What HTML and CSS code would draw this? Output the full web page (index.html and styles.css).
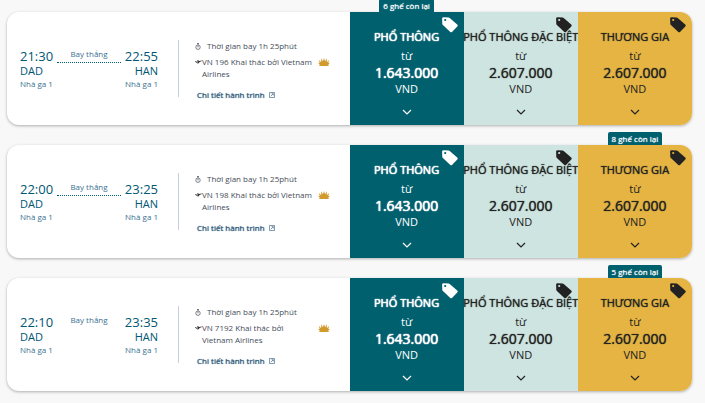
FILE: index.html
```
<!DOCTYPE html>
<html lang="vi">

<head>
  <meta charset="UTF-8">
  <meta name="viewport" content="width=device-width, initial-scale=1.0">
  <title>Chuyến bay DAD - HAN</title>
  <link rel="stylesheet" href="styles.css">
</head>

<body>

  <!-- shared icons -->
  <svg class="sprite" aria-hidden="true">
    <symbol id="icon-tag" viewBox="0 0 16 16">
      <path fill-rule="evenodd" d="M1.600 0.200L6.600 0.400Q7.200 0.500 7.700 0.900L15.200 7.600Q16.200 8.500 15.300 9.400L10 14.900Q9.200 15.700 8.300 14.900L0.900 8Q0.400 7.500 0.300 6.900L0.100 1.600Q0.100 0.200 1.600 0.200ZM3.200 1.900A1.100 1.100 0 1 0 3.200 4.100A1.100 1.100 0 1 0 3.200 1.900Z" />
    </symbol>
    <symbol id="icon-chevron" viewBox="0 0 10 6">
      <path d="M1 1L5 5L9 1" fill="none" stroke="currentColor" stroke-width="1.200" />
    </symbol>
    <symbol id="icon-clock" viewBox="0 0 6 7">
      <circle cx="3" cy="4.200" r="2.200" fill="none" stroke="currentColor" stroke-width="0.700" />
      <path d="M2 0.500H4M3 0.500V2M3 2.800V4.400" fill="none" stroke="currentColor" stroke-width="0.700" />
    </symbol>
    <symbol id="icon-plane" viewBox="0 0 7 6">
      <path d="M0 2L0.800 2L1.600 2.700L3 2.400L1.900 1.400L2.600 1.200L4.600 2L6.200 1.600Q7 1.600 6.800 2.100L4.700 3L3 4.800L2.300 4.900L3.100 3.400L1.200 3.700Z" />
    </symbol>
    <symbol id="icon-external" viewBox="0 0 6 6">
      <path d="M3 0.500H0.500V5.500H5.500V0.500H3M1.800 4.200L4.200 1.800M2.500 1.700H4.300V3.500" fill="none" stroke="currentColor" stroke-width="0.600" />
    </symbol>
    <symbol id="icon-lotus" viewBox="0 0 12 8">
      <path d="M6 0L7.100 3.200L8.900 0.300L8.800 4.200L11.300 1.700L10.200 5L12 4.800L10.300 6.600L11 7.700Q6 8.200 1 7.700L1.700 6.600L0 4.800L1.800 5L0.700 1.700L3.200 4.200L3.100 0.300L4.900 3.200Z" />
    </symbol>
  </svg>

  <main class="flights">
    <article class="flight">
      <div class="info">
        <div class="route">
          <div class="stop">
            <span class="time">21:30</span>
            <span class="code">DAD</span>
            <span class="terminal">Nhà ga 1</span>
          </div>
          <div class="direct dotted">Bay thẳng</div>
          <div class="stop arrive">
            <span class="time">22:55</span>
            <span class="code">HAN</span>
            <span class="terminal">Nhà ga 1</span>
          </div>
        </div>
        <div class="details">
          <p class="duration"><svg class="clock"><use href="#icon-clock" /></svg>Thời gian bay 1h 25phút</p>
          <div class="operator">
            <svg class="plane"><use href="#icon-plane" /></svg>
            <span class="carrier">VN 196 Khai thác bởi Vietnam Airlines</span>
            <svg class="lotus"><use href="#icon-lotus" /></svg>
          </div>
          <a class="more" href="#">Chi tiết hành trình<svg class="external"><use href="#icon-external" /></svg></a>
        </div>
      </div>
      <button type="button" class="fare economy">
        <span class="seats">6 ghế còn lại</span>
        <svg class="tag"><use href="#icon-tag" /></svg>
        <span class="cabin">PHỔ THÔNG</span>
        <span class="from">từ</span>
        <span class="price">1.643.000</span>
        <span class="currency">VND</span>
        <svg class="chevron"><use href="#icon-chevron" /></svg>
      </button>
      <button type="button" class="fare premium">
        <svg class="tag"><use href="#icon-tag" /></svg>
        <span class="cabin">PHỔ THÔNG ĐẶC BIỆT</span>
        <span class="from">từ</span>
        <span class="price">2.607.000</span>
        <span class="currency">VND</span>
        <svg class="chevron"><use href="#icon-chevron" /></svg>
      </button>
      <button type="button" class="fare business">
        <svg class="tag"><use href="#icon-tag" /></svg>
        <span class="cabin">THƯƠNG GIA</span>
        <span class="from">từ</span>
        <span class="price">2.607.000</span>
        <span class="currency">VND</span>
        <svg class="chevron"><use href="#icon-chevron" /></svg>
      </button>
    </article>

    <article class="flight">
      <div class="info">
        <div class="route">
          <div class="stop">
            <span class="time">22:00</span>
            <span class="code">DAD</span>
            <span class="terminal">Nhà ga 1</span>
          </div>
          <div class="direct dotted">Bay thẳng</div>
          <div class="stop arrive">
            <span class="time">23:25</span>
            <span class="code">HAN</span>
            <span class="terminal">Nhà ga 1</span>
          </div>
        </div>
        <div class="details">
          <p class="duration"><svg class="clock"><use href="#icon-clock" /></svg>Thời gian bay 1h 25phút</p>
          <div class="operator">
            <svg class="plane"><use href="#icon-plane" /></svg>
            <span class="carrier">VN 198 Khai thác bởi Vietnam Airlines</span>
            <svg class="lotus"><use href="#icon-lotus" /></svg>
          </div>
          <a class="more" href="#">Chi tiết hành trình<svg class="external"><use href="#icon-external" /></svg></a>
        </div>
      </div>
      <button type="button" class="fare economy">
        <svg class="tag"><use href="#icon-tag" /></svg>
        <span class="cabin">PHỔ THÔNG</span>
        <span class="from">từ</span>
        <span class="price">1.643.000</span>
        <span class="currency">VND</span>
        <svg class="chevron"><use href="#icon-chevron" /></svg>
      </button>
      <button type="button" class="fare premium">
        <svg class="tag"><use href="#icon-tag" /></svg>
        <span class="cabin">PHỔ THÔNG ĐẶC BIỆT</span>
        <span class="from">từ</span>
        <span class="price">2.607.000</span>
        <span class="currency">VND</span>
        <svg class="chevron"><use href="#icon-chevron" /></svg>
      </button>
      <button type="button" class="fare business">
        <span class="seats">8 ghế còn lại</span>
        <svg class="tag"><use href="#icon-tag" /></svg>
        <span class="cabin">THƯƠNG GIA</span>
        <span class="from">từ</span>
        <span class="price">2.607.000</span>
        <span class="currency">VND</span>
        <svg class="chevron"><use href="#icon-chevron" /></svg>
      </button>
    </article>

    <article class="flight">
      <div class="info">
        <div class="route">
          <div class="stop">
            <span class="time">22:10</span>
            <span class="code">DAD</span>
            <span class="terminal">Nhà ga 1</span>
          </div>
          <div class="direct">Bay thẳng</div>
          <div class="stop arrive">
            <span class="time">23:35</span>
            <span class="code">HAN</span>
            <span class="terminal">Nhà ga 1</span>
          </div>
        </div>
        <div class="details">
          <p class="duration"><svg class="clock"><use href="#icon-clock" /></svg>Thời gian bay 1h 25phút</p>
          <div class="operator">
            <svg class="plane"><use href="#icon-plane" /></svg>
            <span class="carrier">VN 7192 Khai thác bởi Vietnam Airlines</span>
            <svg class="lotus"><use href="#icon-lotus" /></svg>
          </div>
          <a class="more" href="#">Chi tiết hành trình<svg class="external"><use href="#icon-external" /></svg></a>
        </div>
      </div>
      <button type="button" class="fare economy">
        <svg class="tag"><use href="#icon-tag" /></svg>
        <span class="cabin">PHỔ THÔNG</span>
        <span class="from">từ</span>
        <span class="price">1.643.000</span>
        <span class="currency">VND</span>
        <svg class="chevron"><use href="#icon-chevron" /></svg>
      </button>
      <button type="button" class="fare premium">
        <svg class="tag"><use href="#icon-tag" /></svg>
        <span class="cabin">PHỔ THÔNG ĐẶC BIỆT</span>
        <span class="from">từ</span>
        <span class="price">2.607.000</span>
        <span class="currency">VND</span>
        <svg class="chevron"><use href="#icon-chevron" /></svg>
      </button>
      <button type="button" class="fare business">
        <span class="seats">5 ghế còn lại</span>
        <svg class="tag"><use href="#icon-tag" /></svg>
        <span class="cabin">THƯƠNG GIA</span>
        <span class="from">từ</span>
        <span class="price">2.607.000</span>
        <span class="currency">VND</span>
        <svg class="chevron"><use href="#icon-chevron" /></svg>
      </button>
    </article>
  </main>

</body>

</html>
```
FILE: styles.css
```
* {
  box-sizing: border-box;
}

body {
  margin: 0;
  background: #f8f8f8;
  color: #005674;
  font-family: "Open Sans", sans-serif;
  font-size: 8px;
  line-height: 12px;
}

svg {
  display: block;
  flex: none;
  fill: currentColor;
}

.sprite {
  display: none;
}

.flights {
  display: flex;
  flex-direction: column;
  gap: 20px;
  padding: 12px 13px 11px 7px;
}

.flight {
  display: grid;
  grid-template-columns: 3fr repeat(3, minmax(0, 1fr));
  border-radius: 12px;
  background: white;
  box-shadow: 0 1px 3px rgba(0, 0, 0, 0.3);
}

.info {
  display: flex;
  align-items: center;
  padding-left: 13px;
}

.route {
  display: flex;
  align-items: flex-start;
  gap: 4px;
  width: 159px;
  padding: 8px 20px 7px 0;
  border-right: 1px solid #c4cedc;
}

.stop {
  display: flex;
  flex-direction: column;
}

.arrive {
  align-items: flex-end;
}

.time {
  font-size: 13px;
  line-height: 16px;
}

.code {
  font-size: 11px;
  line-height: 14px;
}

.terminal {
  color: #3a7090;
}

.direct {
  flex: 1;
  height: 15px;
  color: #3a7090;
  text-align: center;
}

.dotted {
  border-bottom: 1px dotted #00607a;
}

.details {
  flex: 1;
  padding: 4px 0 0 16px;
  color: #454c58;
}

.duration {
  display: flex;
  align-items: center;
  gap: 6px;
  margin: 0 0 4px;
}

.clock {
  width: 6px;
  height: 7px;
}

.operator {
  display: flex;
  align-items: flex-start;
}

.plane {
  width: 7px;
  height: 6px;
  margin-top: 3px;
  color: #333;
}

.carrier {
  width: 112px;
}

.lotus {
  width: 12px;
  height: 8px;
  margin: 2px 0 0 4px;
  color: #d09a2c;
}

.more {
  display: flex;
  align-items: center;
  gap: 4px;
  margin-top: 9px;
  padding-left: 2px;
  color: #2f5878;
  text-decoration: none;
  text-shadow: 0 0 1px currentColor;
}

.external {
  width: 6px;
  height: 6px;
}

.fare {
  position: relative;
  display: flex;
  flex-direction: column;
  align-items: center;
  padding: 17px 0 10px;
  border: 0;
  color: #222;
  font-family: inherit;
  font-size: 11px;
  line-height: 16px;
  cursor: pointer;
}

.economy {
  background: #00606e;
  color: white;
}

.premium {
  background: #cee4e0;
}

.business {
  border-radius: 0 12px 12px 0;
  background: #e5b443;
}

.seats {
  position: absolute;
  bottom: 100%;
  padding: 0 4px;
  border-radius: 2px 2px 0 0;
  background: #00606e;
  color: white;
  font-size: 8px;
  line-height: 13px;
  text-shadow: 0 0 1px currentColor;
  white-space: nowrap;
}

.tag {
  position: absolute;
  top: 5px;
  right: 6px;
  width: 16px;
  height: 16px;
}

.cabin {
  text-shadow: 0 0 1px currentColor;
  white-space: nowrap;
}

.from {
  margin-top: 3px;
}

.price {
  margin-top: 1px;
  font-size: 14px;
  text-shadow: 0 0 1px currentColor;
}

.economy .cabin,
.economy .price {
  text-shadow: 0 0 1px currentColor, 0 0 1px currentColor;
}

.chevron {
  width: 10px;
  height: 6px;
  margin-top: 12px;
}
```
